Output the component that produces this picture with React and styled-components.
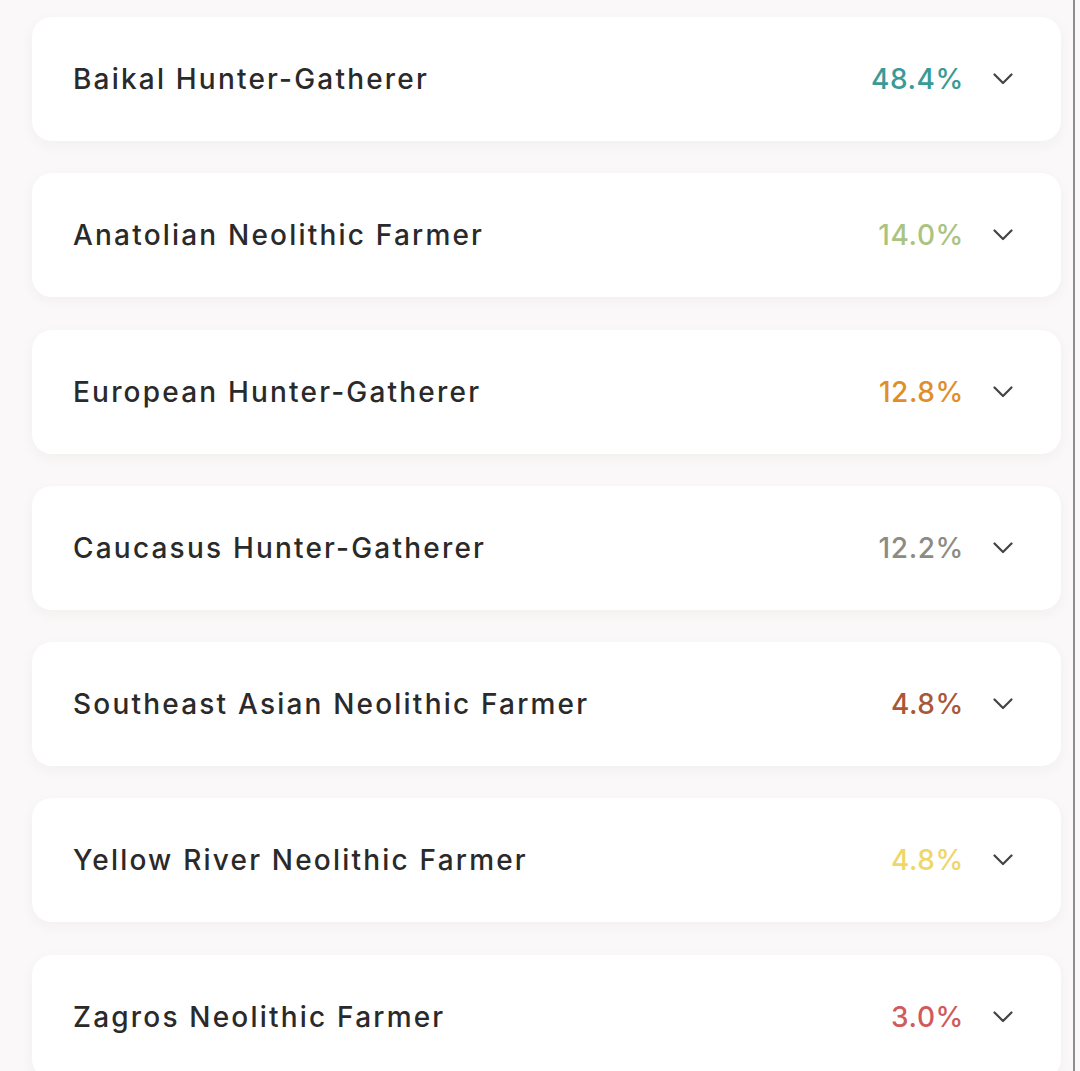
import React from 'react';
import styled, { createGlobalStyle } from 'styled-components';

const GlobalStyle = createGlobalStyle`
  html, body {
    margin: 0;
    padding: 0;
    background: #faf8f8;
  }
  body {
    font-family: "Inter", "Noto Sans", sans-serif;
  }
`;

const Page = styled.div`
  width: 1075px;
  height: 1071px;
  overflow: hidden;
  border-right: 2px solid #8e8e8e;
  box-sizing: border-box;
`;

const List = styled.ul`
  list-style: none;
  margin: 0;
  padding: 17px 0 0 32px;
  display: flex;
  flex-direction: column;
  gap: 32.3px;
`;

const Card = styled.li`
  width: 1029px;
  height: 124px;
  box-sizing: border-box;
  background: #ffffff;
  border-radius: 20px;
  box-shadow: 0 4px 14px rgba(60, 40, 40, 0.045);
  display: flex;
  align-items: center;
  padding: 0 48px 0 41px;
`;

const Nome = styled.span`
  flex: 1;
  font-size: 28px;
  font-weight: 500;
  letter-spacing: 2.2px;
  color: #2a2a2a;
`;

const Percentual = styled.span`
  font-size: 28px;
  font-weight: 500;
  letter-spacing: 0.6px;
  color: ${props => props.cor};
  margin-right: 29px;
`;

const Seta = styled.svg`
  width: 20px;
  height: 12px;
  flex-shrink: 0;
`;

const populacoes = [
  { nome: 'Baikal Hunter-Gatherer', valor: '48.4%', cor: '#3a9a96' },
  { nome: 'Anatolian Neolithic Farmer', valor: '14.0%', cor: '#a9c47f' },
  { nome: 'European Hunter-Gatherer', valor: '12.8%', cor: '#e08e2a' },
  { nome: 'Caucasus Hunter-Gatherer', valor: '12.2%', cor: '#8c8c84' },
  { nome: 'Southeast Asian Neolithic Farmer', valor: '4.8%', cor: '#a85838' },
  { nome: 'Yellow River Neolithic Farmer', valor: '4.8%', cor: '#efd66a' },
  { nome: 'Zagros Neolithic Farmer', valor: '3.0%', cor: '#d05a5c' },
];

function App() {
  return (
    <Page>
      <GlobalStyle />
      <List>
        {populacoes.map((p) => (
          <Card key={p.nome}>
            <Nome>{p.nome}</Nome>
            <Percentual cor={p.cor}>{p.valor}</Percentual>
            <Seta viewBox="0 0 20 12">
              <path d="M1.5 1.5 L10 10 L18.5 1.5" fill="none" stroke="#444" strokeWidth="2.2" strokeLinecap="round" strokeLinejoin="round" />
            </Seta>
          </Card>
        ))}
      </List>
    </Page>
  );
}

export default App;
